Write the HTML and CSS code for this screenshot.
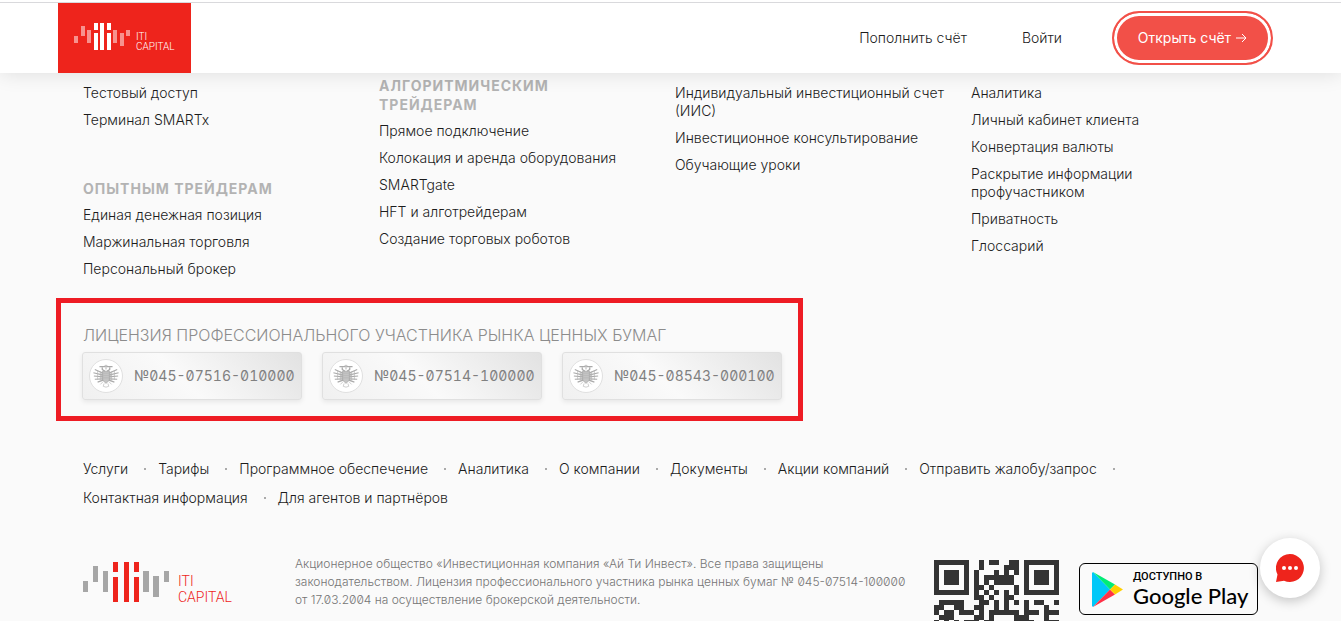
FILE: index.html
```html
<!DOCTYPE html>
<html lang="ru">
<head>
<meta charset="utf-8">
<meta name="viewport" content="width=device-width, initial-scale=1">
<title>ITI Capital</title>
<link rel="stylesheet" href="styles.css">
</head>
<body>
<svg class="defs" aria-hidden="true">
  <defs>
    <symbol id="eagle" viewBox="0 0 30 30">
      <g fill="none" stroke="#aaa">
        <path d="M8 5h6M16 5h6M11 6v2l3 2M19 6v2l-3 2" stroke-width="1.4"/>
        <path d="M13 4.500h4M15 3v5" stroke-width="1"/>
        <path d="M11 10v9l4 4 4-4v-9z" fill="#c4c4c4" stroke="#aaa" stroke-width=".8"/>
        <path d="M12 12 3 8M12 14 1.500 11.500M12 16 2 15M12 18 3 18.500M12 19.500 6 21.500M18 12l9-4M18 14l10.500-2.500M18 16l10-1M18 18l9 .5M18 19.500l6 2" stroke-width="1.300"/>
        <path d="M9 12h12M9 14.500h12M9 17h12M6 9v10M9 10v10M21 10v10M24 9v10" stroke="#b4b4b4" stroke-width=".7"/>
        <path d="M12 21l-3 3M18 21l3 3M13 23l-1 3 3 1 3-1-1-3" stroke="#ccc" stroke-width="1"/>
      </g>
    </symbol>
  </defs>
</svg>

<header class="header">
  <a class="header-logo" href="#" aria-label="ITI Capital">
    <svg class="logo-small" viewBox="0 0 56 28" aria-hidden="true">
      <g fill="#fff">
        <path opacity=".5" d="M0 13h4v7H0zM7 3h4v10H7zM13 7h4v13h-4zM39 7h4v13h-4zM46 10h4v13h-4zM52 7h4v6h-4z"/>
        <path d="M20 0h4v7h-4zM20 10h4v17h-4zM26 0h4v27h-4zM33 0h4v7h-4zM33 10h4v17h-4z"/>
      </g>
    </svg>
    <span class="logo-name"><span>ITI</span><span>CAPITAL</span></span>
  </a>
  <nav class="header-nav">
    <a href="#">Пополнить счёт</a>
    <a href="#">Войти</a>
    <a class="open-account" href="#"><span>Открыть счёт</span>
      <svg viewBox="0 0 11 10" aria-hidden="true"><path d="M0 5h10M6 1l4 4-4 4" fill="none" stroke="#fff"/></svg>
    </a>
  </nav>
</header>

<footer class="footer">
  <div class="columns">
    <section class="column column-cut">
      <ul>
        <li><a href="#">Тестовый доступ</a></li>
        <li><a href="#">Терминал SMARTx</a></li>
      </ul>
      <h2 class="next">Опытным трейдерам</h2>
      <ul>
        <li><a href="#">Единая денежная позиция</a></li>
        <li><a href="#">Маржинальная торговля</a></li>
        <li><a href="#">Персональный брокер</a></li>
      </ul>
    </section>
    <section class="column">
      <h2>Алгоритмическим<br>трейдерам</h2>
      <ul>
        <li><a href="#">Прямое подключение</a></li>
        <li><a href="#">Колокация и аренда оборудования</a></li>
        <li><a href="#">SMARTgate</a></li>
        <li><a href="#">HFT и алготрейдерам</a></li>
        <li><a href="#">Создание торговых роботов</a></li>
      </ul>
    </section>
    <section class="column column-cut">
      <ul>
        <li><a href="#">Индивидуальный инвестиционный счет (ИИС)</a></li>
        <li><a href="#">Инвестиционное консультирование</a></li>
        <li><a href="#">Обучающие уроки</a></li>
      </ul>
    </section>
    <section class="column column-cut">
      <ul>
        <li><a href="#">Аналитика</a></li>
        <li><a href="#">Личный кабинет клиента</a></li>
        <li><a href="#">Конвертация валюты</a></li>
        <li><a href="#">Раскрытие информации<br>профучастником</a></li>
        <li><a href="#">Приватность</a></li>
        <li><a href="#">Глоссарий</a></li>
      </ul>
    </section>
  </div>

  <section class="licenses">
    <h2>Лицензия профессионального участника рынка ценных бумаг</h2>
    <div class="cards">
      <a class="card" href="#"><span class="seal"><svg aria-hidden="true"><use href="#eagle"/></svg></span>№045-07516-010000</a>
      <a class="card" href="#"><span class="seal"><svg aria-hidden="true"><use href="#eagle"/></svg></span>№045-07514-100000</a>
      <a class="card" href="#"><span class="seal"><svg aria-hidden="true"><use href="#eagle"/></svg></span>№045-08543-000100</a>
    </div>
  </section>

  <nav>
    <ul class="sitemap">
      <li><a href="#">Услуги</a></li>
      <li><a href="#">Тарифы</a></li>
      <li><a href="#">Программное обеспечение</a></li>
      <li><a href="#">Аналитика</a></li>
      <li><a href="#">О компании</a></li>
      <li><a href="#">Документы</a></li>
      <li><a href="#">Акции компаний</a></li>
      <li><a href="#">Отправить жалобу/запрос</a></li>
      <li><a href="#">Контактная информация</a></li>
      <li><a href="#">Для агентов и партнёров</a></li>
    </ul>
  </nav>

  <div class="legal">
    <a class="footer-logo" href="#" aria-label="ITI Capital">
      <svg viewBox="0 0 87 40" aria-hidden="true">
        <path fill="#a6a6a6" d="M0 19h5v11H0zM10 4h5v16h-5zM20 9h5v21h-5zM60 9h6v21h-6zM70 14h6v21h-6zM81 9h5v11h-5z"/>
        <path fill="#ee241c" d="M30 0h5v10h-5zM30 15h5v25h-5zM41 0h5v40h-5zM51 0h5v10h-5zM51 15h5v25h-5z"/>
      </svg>
      <span class="logo-name"><span>ITI</span><span>CAPITAL</span></span>
    </a>
    <p>Акционерное общество «Инвестиционная компания «Ай Ти Инвест». Все права защищены законодательством. Лицензия профессионального участника рынка ценных бумаг № 045-07514-100000 от 17.03.2004 на осуществление брокерской деятельности.</p>
    <svg class="qr" viewBox="0 0 25 25" role="img" aria-label="QR-код" shape-rendering="crispEdges">
      <path fill="#333" fill-rule="evenodd" d="M0 0h7v7H0zM1 1v5h5V1zM2 2h3v3H2zM18 0h7v7h-7zM19 1v5h5V1zM20 2h3v3h-3zM0 18h7v7H0zM1 19v5h5v-5zM2 20h3v3H2z"/>
      <path fill="#333" d="M9 0h1v2H9zM11 0h2v1h-2zM15 0h2v2h-2zM14 1h1v2h-1zM8 2h1v6H8zM12 2h1v1h-1zM16 2h1v1h-1zM10 3h6v1h-6zM10 4h1v1h-1zM12 4h4v1h-4zM9 5h1v1H9zM11 5h1v1h-1zM16 5h1v2h-1zM10 6h1v1h-1zM12 6h1v1h-1zM14 6h1v4h-1zM9 7h1v4H9zM11 7h1v1h-1zM15 7h1v1h-1zM10 8h1v1h-1zM12 8h1v2h-1zM16 8h1v1h-1zM8 9h1v1H8zM11 10h6v1h-6zM11 11h1v1h-1zM16 11h1v1h-1zM1 8h5v1H1zM0 9h2v1H0zM4 9h2v1H4zM0 10h1v1H0zM2 10h2v1H2zM5 10h3v1H5zM1 11h3v1H1zM8 11h2v1H8zM0 12h1v1H0zM2 12h1v1H2zM4 12h1v1H4zM6 12h3v1H6zM10 12h2v1h-2zM16 12h4v1h-4zM18 8h1v2h-1zM20 8h2v1h-2zM22 9h1v3h-1zM18 10h3v1h-3zM24 8h1v1h-1zM23 10h2v1h-2zM17 11h2v1h-2zM22 12h3v1h-3z"/>
    </svg>
    <a class="google-play" href="#">
      <svg viewBox="0 0 31 35" aria-hidden="true">
        <path fill="#00c8f8" d="M1 0 18 17.500 1 35 0 34V1z"/>
        <path fill="#00ec76" d="M1 0 23 12.500 18 17.500z"/>
        <path fill="#ff3147" d="M1 35 23 22.500 18 17.500z"/>
        <path fill="#ffcf00" d="M23 12.500 31 17.500 23 22.500 18 17.500z"/>
      </svg>
      <span class="store"><small>ДОСТУПНО В</small><strong>Google Play</strong></span>
    </a>
  </div>
</footer>

<button class="chat" type="button" aria-label="Открыть чат">
  <svg viewBox="0 0 28 28" aria-hidden="true">
    <path fill="#ee241c" d="M14 0a14 14 0 1 1-6 26.700L0 28l1.500-7.500A14 14 0 0 1 14 0z"/>
    <g fill="#fff"><circle cx="8" cy="14" r="2"/><circle cx="14" cy="14" r="2"/><circle cx="20" cy="14" r="2"/></g>
  </svg>
</button>
</body>
</html>
```
FILE: styles.css
```css
* { box-sizing: border-box; }

body {
  margin: 0;
  height: 100vh;
  overflow: hidden;
  background: #fafafa;
  color: #1c1c1c;
  font: 300 14px/18px Inter, "Liberation Sans", sans-serif;
}

a { color: inherit; text-decoration: none; }
ul { margin: 0; padding: 0; list-style: none; }
h2, p { margin: 0; }
.defs { display: none; }

.header {
  position: relative;
  display: flex;
  justify-content: space-between;
  height: 73px;
  padding: 0 68px 0 58px;
  background: linear-gradient(#fff 2px, #d9d9dc 2px, #d9d9dc 3px, #fff 3px);
  box-shadow: 0 0 20px rgba(0, 0, 0, .12);
}
.header-logo {
  display: flex;
  gap: 6px;
  width: 133px;
  margin-top: 3px;
  padding: 20px 0 0 16px;
  background: #ee241c;
  color: #fff;
}
.header-logo svg { flex: none; width: 56px; height: 28px; }
.header-logo .logo-name { padding-top: 9px; font-size: 10px; line-height: 10px; }
.logo-name {
  display: flex;
  flex-direction: column;
  font-family: Roboto, sans-serif;
  font-weight: 300;
}
.header-nav {
  display: flex;
  align-items: center;
  gap: 55px;
  padding-top: 3px;
}
.open-account {
  display: flex;
  align-items: center;
  justify-content: center;
  gap: 5px;
  width: 161px;
  height: 54px;
  margin-left: -5px;
  border: 2px solid #f25048;
  border-radius: 27px;
  background: #f25048;
  box-shadow: inset 0 0 0 3px #fff;
  color: #fff;
  font-weight: 400;
}
.open-account svg { width: 11px; height: 10px; }

.footer { padding: 3px 74px 0 83px; }
.columns {
  display: grid;
  grid-template-columns: repeat(4, 1fr);
}
.column-cut { padding-top: 8px; }
.column li { margin-bottom: 9px; }
.column h2 {
  margin-bottom: 8px;
  color: #b3b3b3;
  font-size: 14px;
  font-weight: 700;
  line-height: 19px;
  letter-spacing: 1px;
  text-transform: uppercase;
}
.column .next { margin-top: 50px; }

.licenses {
  width: fit-content;
  margin: 11px 0 0 -27px;
  padding: 21px 16px 16px 21px;
  border: 5px solid #ee1c24;
}
.licenses h2 {
  padding: 1px;
  color: #8c8c8c;
  font-size: 16px;
  font-weight: 300;
  line-height: 20px;
  text-transform: uppercase;
}
.cards { display: flex; gap: 20px; margin-top: 6px; }
.card {
  display: flex;
  align-items: center;
  gap: 11px;
  width: 220px;
  height: 48px;
  padding-left: 6px;
  border: 1px solid #e0e0e0;
  border-radius: 3px;
  background: linear-gradient(45deg, #f0f0f0, #fafafa 45%, #e2e2e2);
  box-shadow: 0 2px 5px rgba(0, 0, 0, .08);
  color: #808080;
  font-weight: 400;
  font-variant-numeric: tabular-nums slashed-zero;
}
.seal {
  display: flex;
  align-items: center;
  justify-content: center;
  width: 34px;
  height: 34px;
  border: 1px solid #e0e0e0;
  border-radius: 50%;
  background: #fff;
}
.seal svg { width: 28px; height: 28px; }

.sitemap {
  display: flex;
  flex-wrap: wrap;
  row-gap: 11px;
  margin-top: 39px;
}
.sitemap li { display: flex; }
.sitemap li:not(:last-child)::after {
  content: "";
  width: 2px;
  height: 2px;
  margin: 8px 12px 0 16px;
  background: #aaa;
}

.legal {
  display: flex;
  align-items: flex-start;
  margin-top: 48px;
}
.footer-logo {
  display: flex;
  flex: none;
  gap: 8px;
  width: 212px;
  padding-top: 7px;
  color: #ee241c;
}
.footer-logo svg { width: 87px; height: 40px; }
.footer-logo .logo-name { padding-top: 11px; font-size: 14px; line-height: 16px; }
.legal p {
  flex: 0 0 639px;
  padding-right: 15px;
  color: #757575;
  font-size: 12px;
  font-variant-numeric: slashed-zero;
}
.qr { flex: none; width: 125px; height: 125px; margin-top: 5px; }
.google-play {
  display: flex;
  flex: none;
  align-items: center;
  gap: 10px;
  width: 179px;
  height: 52px;
  margin: 8px 0 0 20px;
  padding-left: 12px;
  border: 1px solid #000;
  border-radius: 6px;
  color: #000;
}
.google-play svg { width: 31px; height: 35px; }
.store { display: flex; flex-direction: column; }
.store small { font: 500 11px/13px Roboto, sans-serif; }
.store strong { font: 500 22px/26px Lato, sans-serif; }

.chat {
  position: fixed;
  right: 21px;
  bottom: 23px;
  display: flex;
  align-items: center;
  justify-content: center;
  width: 60px;
  height: 60px;
  padding: 0;
  border: 0;
  border-radius: 50%;
  background: #fff;
  box-shadow: 0 3px 12px rgba(0, 0, 0, .22);
}
.chat svg { width: 28px; height: 28px; }
```
